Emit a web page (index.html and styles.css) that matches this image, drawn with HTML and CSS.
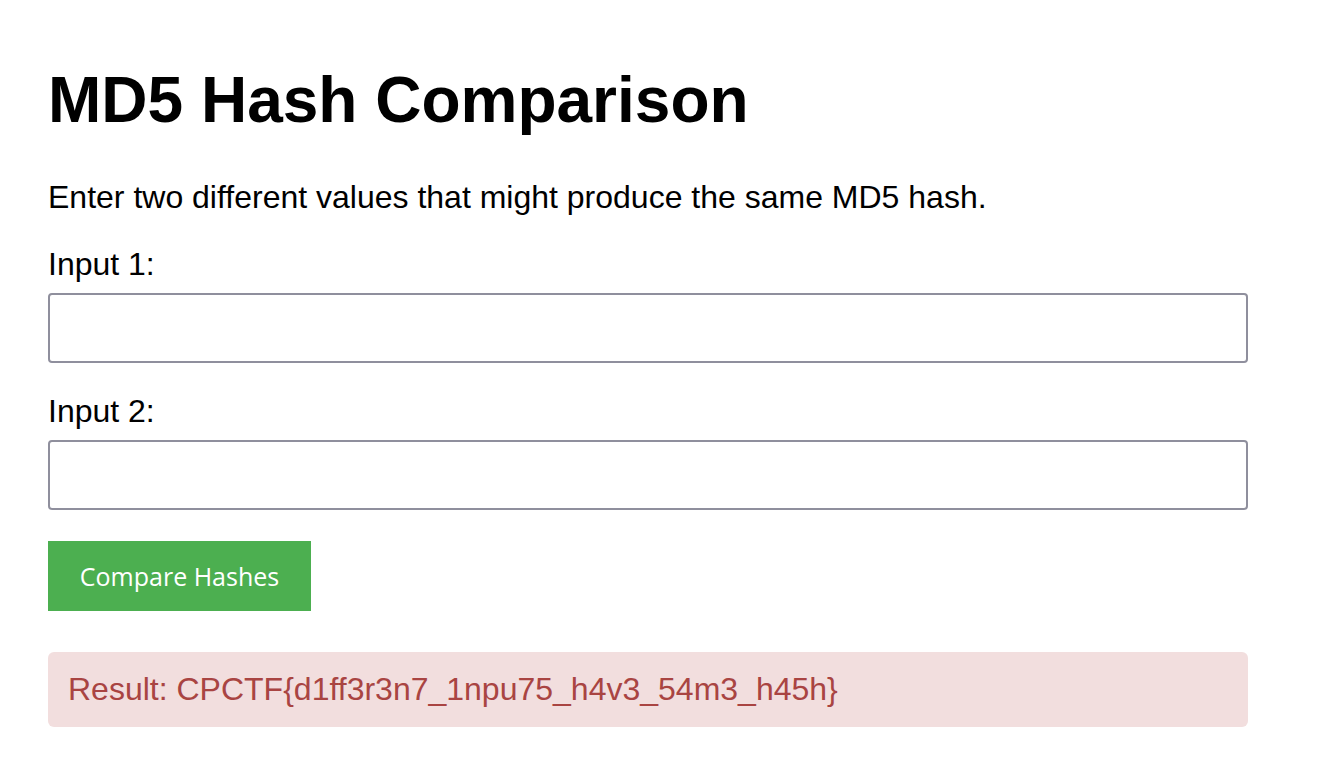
FILE: index.html
```html
<!DOCTYPE html>
<html lang="en">
<head>
<meta charset="utf-8">
<title>MD5 Hash Comparison</title>
<link rel="stylesheet" href="styles.css">
</head>
<body>
<div class="container">
  <h1 class="title">MD5 Hash Comparison</h1>
  <p class="intro">Enter two different values that might produce the same MD5 hash.</p>
  <form class="form">
    <div class="field">
      <label class="label" for="input1">Input 1:</label>
      <input class="input" type="text" id="input1" name="input1">
    </div>
    <div class="field">
      <label class="label" for="input2">Input 2:</label>
      <input class="input" type="text" id="input2" name="input2">
    </div>
    <button class="button" type="submit">Compare Hashes</button>
  </form>
  <div class="result">Result: CPCTF{d1ff3r3n7_1npu75_h4v3_54m3_h45h}</div>
</div>
</body>
</html>
```

FILE: styles.css
```css
html, body {
  margin: 0;
  padding: 0;
  background: #ffffff;
}

body {
  font-family: "Liberation Sans", Arial, sans-serif;
  font-size: 32px;
  color: #000000;
}

.container {
  width: 1200px;
  padding: 63px 48px 0;
}

.title {
  font-size: 64px;
  font-weight: bold;
  margin: 0 0 42px;
  line-height: normal;
}

.intro {
  margin: 0 0 30px;
}

.form {
  display: flex;
  flex-direction: column;
  align-items: flex-start;
}

.field {
  width: 100%;
  margin-bottom: 30px;
}

.label {
  display: block;
  margin-bottom: 10px;
}

.input {
  display: block;
  width: 100%;
  height: 70px;
  box-sizing: border-box;
  border: 2px solid #8f8f9d;
  border-radius: 4px;
  background: #ffffff;
  padding: 0 12px;
  font-size: 26px;
  font-family: "Liberation Sans", Arial, sans-serif;
}

.button {
  width: 263px;
  height: 70px;
  margin-top: 1px;
  background: #4caf50;
  color: #ffffff;
  border: none;
  border-radius: 0;
  font-family: "Open Sans", "Noto Sans", sans-serif;
  font-size: 25px;
  padding: 0;
  cursor: pointer;
}

.result {
  margin-top: 41px;
  width: 100%;
  box-sizing: border-box;
  padding: 19px 20px;
  background: #f2dede;
  color: #a94442;
  border-radius: 6px;
}
```
